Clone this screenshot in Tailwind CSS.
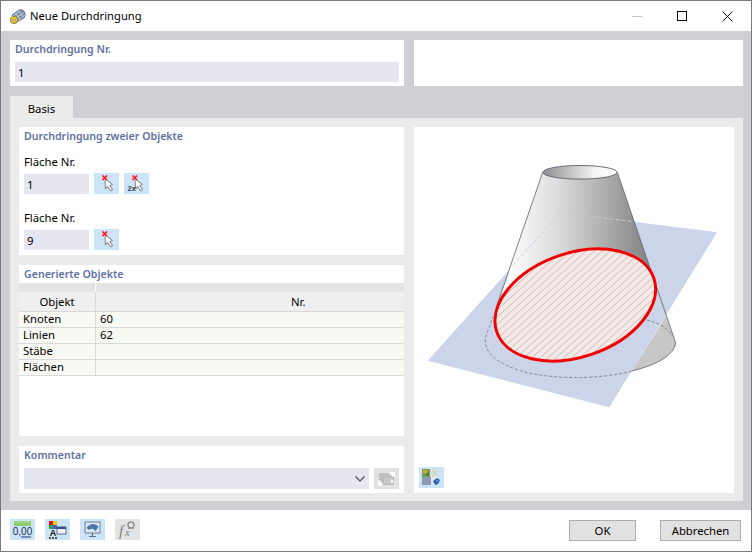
<!DOCTYPE html>
<html lang="de">
<head>
  <meta charset="UTF-8">
  <title>Neue Durchdringung</title>
  <script src="https://cdn.jsdelivr.net/npm/@tailwindcss/browser@4"></script>
</head>
<body class="bg-white">
<svg width="0" height="0" class="absolute">
  <defs>
    <symbol id="pick" viewBox="0 0 25 21">
      <path d="M11 6 L11.5 15.5 L13.8 13.5 L16.5 18 L18.5 16.5 L15.8 12.5 L18.5 11.5 Z" fill="#fff" stroke="#808080" stroke-width="1"/>
      <path d="M16.5 18 L18.5 16.5 M11.8 15.5 L13.8 13.5" stroke="#9c9c9c" stroke-width="1.2" fill="none"/>
      <path d="M8.5 2.5 L13 7 M13 2.5 L8.5 7" stroke="#ffa0a8" stroke-width="2.4" fill="none"/>
      <path d="M8.5 2.5 L13 7 M13 2.5 L8.5 7" stroke="#f0141e" stroke-width="1.1" fill="none"/>
    </symbol>
    <symbol id="pick2" viewBox="0 0 25 21">
      <path d="M11 6 L11.5 15.5 L13.8 13.5 L16.5 18 L18.5 16.5 L15.8 12.5 L18.5 11.5 Z" fill="#fff" stroke="#808080" stroke-width="1"/>
      <path d="M16.5 18 L18.5 16.5 M11.8 15.5 L13.8 13.5" stroke="#9c9c9c" stroke-width="1.2" fill="none"/>
      <path d="M8.5 2.5 L13 7 M13 2.5 L8.5 7" stroke="#ffa0a8" stroke-width="2.4" fill="none"/>
      <path d="M8.5 2.5 L13 7 M13 2.5 L8.5 7" stroke="#f0141e" stroke-width="1.1" fill="none"/>
      <text x="3.5" y="18" font-family="Liberation Sans" font-weight="700" font-size="7.5" fill="#3c3c3c">2x</text>
    </symbol>
  </defs>
</svg>

<div class="w-[752px] h-[552px] overflow-hidden flex flex-col border border-[#7a7a7a] text-[11.3px] text-black font-['Noto_Sans',sans-serif]">

  <!-- Title bar -->
  <div class="h-[30px] shrink-0 flex items-center bg-white">
    <svg class="ml-[8px] w-[17px] h-[17px]" viewBox="0 0 17 17">
      <path d="M3 7 L10 2 C12 1 15 2 16 5 C16.5 7 16 9 15 10 L8 14 Z" fill="#7f90ae" stroke="#48536a" stroke-width="0.7"/>
      <path d="M6 4.8 L11 11 M9 3 L14 8.5 M4 8 L11 2.5 M6 11 L14.5 4.5 M9 13 L16 7" stroke="#d9e2f0" stroke-width="0.7" fill="none"/>
      <circle cx="5" cy="12" r="3.7" fill="#e7c23e" stroke="#8e7218" stroke-width="0.7"/>
      <circle cx="5" cy="12.7" r="1.3" fill="#fff6c8" stroke="#6d5610" stroke-width="0.5"/>
    </svg>
    <span class="ml-[4px] text-[11.2px] leading-none">Neue Durchdringung</span>
    <div class="ml-auto flex items-center mr-[18px] gap-[35px]">
      <span class="w-[10px] h-px bg-[#c8c8c8]"></span>
      <span class="w-[10px] h-[10px] border border-black"></span>
      <svg class="w-[11px] h-[11px]" viewBox="0 0 11 11"><path d="M0.5 0.5 L10.5 10.5 M10.5 0.5 L0.5 10.5" stroke="#111" stroke-width="1" fill="none"/></svg>
    </div>
  </div>

  <!-- Dialog body -->
  <div class="h-[479px] shrink-0 bg-[#d0d0d4] pl-[9px] pr-[8px] pt-[9px]">
    <div class="flex gap-[10px] h-[46px]">
      <div class="w-[394px] bg-white px-[5px] pt-[2px]">
        <div class="h-[20px] leading-[14px] font-semibold text-[10.6px] text-[#6072a0]">Durchdringung Nr.</div>
        <div class="h-[20px] bg-[#e6e6f0] px-[3px] leading-[21px]">1</div>
      </div>
      <div class="flex-1 bg-white"></div>
    </div>

    <div class="mt-[10px] w-[63px] h-[22px] bg-[#ebebeb] text-center leading-[26px]">Basis</div>

    <div class="h-[383px] bg-[#ebebeb] pt-[9px] pl-[9px] pr-[9px] pb-[8px] flex gap-[10px]">
      <!-- Left column -->
      <div class="w-[385px] flex flex-col gap-[10px]">
        <div class="h-[128px] bg-white px-[5px]">
          <div class="h-[20px] leading-[18px] font-semibold text-[10.6px] text-[#6072a0]">Durchdringung zweier Objekte</div>
          <div class="mt-[7px] h-[19px] leading-[16px]">Fläche Nr.</div>
          <div class="flex items-center">
            <div class="w-[65px] h-[20px] bg-[#e6e6f0] px-[3px] leading-[21px]">1</div>
            <svg class="ml-[5px] w-[25px] h-[21px] bg-[#cce4f7]"><use href="#pick"/></svg>
            <svg class="ml-[5px] w-[25px] h-[21px] bg-[#cce4f7]"><use href="#pick2"/></svg>
          </div>
          <div class="mt-[15px] h-[20px] leading-[17px]">Fläche Nr.</div>
          <div class="flex items-center">
            <div class="w-[65px] h-[20px] bg-[#e6e6f0] px-[3px] leading-[21px]">9</div>
            <svg class="ml-[5px] w-[25px] h-[21px] bg-[#cce4f7]"><use href="#pick"/></svg>
          </div>
        </div>

        <div class="h-[171px] bg-white">
          <div class="h-[18px] pl-[5px] leading-[18px] font-semibold text-[10.6px] text-[#6072a0]">Generierte Objekte</div>
          <div class="h-[9px] bg-[#e4e4e4] flex"><div class="w-[77px] border-r border-[#fafafa]"></div></div>
          <div class="h-[20px] bg-[#efefef] flex border-b border-[#d8d8d8]">
            <div class="w-[77px] text-center leading-[19px] border-r border-[#d8d8d8]">Objekt</div>
            <div class="flex-1 pl-[195px] leading-[19px]">Nr.</div>
          </div>
          <div class="h-[16px] bg-[#f9f9f4] flex border-b border-[#d8d8d8] leading-[14px]">
            <div class="w-[77px] pl-[4px] border-r border-[#d8d8d8]">Knoten</div>
            <div class="flex-1 pl-[4px]">60</div>
          </div>
          <div class="h-[16px] bg-[#f9f9f4] flex border-b border-[#d8d8d8] leading-[14px]">
            <div class="w-[77px] pl-[4px] border-r border-[#d8d8d8]">Linien</div>
            <div class="flex-1 pl-[4px]">62</div>
          </div>
          <div class="h-[16px] bg-[#f9f9f4] flex border-b border-[#d8d8d8] leading-[14px]">
            <div class="w-[77px] pl-[4px] border-r border-[#d8d8d8]">Stäbe</div>
            <div class="flex-1 pl-[4px]"></div>
          </div>
          <div class="h-[16px] bg-[#f9f9f4] flex border-b border-[#d8d8d8] leading-[14px]">
            <div class="w-[77px] pl-[4px] border-r border-[#d8d8d8]">Flächen</div>
            <div class="flex-1 pl-[4px]"></div>
          </div>
        </div>

        <div class="h-[47px] bg-white px-[5px]">
          <div class="h-[22px] leading-[18px] font-semibold text-[10.6px] text-[#6072a0]">Kommentar</div>
          <div class="flex">
            <div class="w-[345px] h-[21px] bg-[#e6e6f0] flex items-center justify-end pr-[4px]">
              <svg class="w-[10px] h-[6px]" viewBox="0 0 10 6"><path d="M0.5 0.5 L5 5 L9.5 0.5" stroke="#444" stroke-width="1.1" fill="none"/></svg>
            </div>
            <div class="ml-[5px] w-[25px] h-[21px] bg-[#e1e1e1] flex items-center justify-center">
              <svg class="w-[17px] h-[14px]" viewBox="0 0 17 14">
                <rect width="17" height="14" fill="#fff"/>
                <rect x="1" y="1" width="10" height="7" fill="#d0d0d0" stroke="#a0a0a0" stroke-width="0.6"/>
                <rect x="3" y="3" width="10" height="7" fill="#d0d0d0" stroke="#a0a0a0" stroke-width="0.6"/>
                <rect x="5" y="5" width="11" height="8" fill="#c8c8c8" stroke="#a0a0a0" stroke-width="0.6"/>
                <rect x="13" y="8" width="2" height="3" fill="#fff"/>
              </svg>
            </div>
          </div>
        </div>
      </div>

      <!-- Preview -->
      <div class="relative w-[320px] h-[366px] bg-white">
        <svg class="block" width="320" height="366" viewBox="414 127 320 366">
          <defs>
            <linearGradient id="coneG" gradientUnits="userSpaceOnUse" x1="505" y1="0" x2="655" y2="0">
              <stop offset="0" stop-color="#ffffff"/>
              <stop offset="0.35" stop-color="#dcdcdc"/>
              <stop offset="1" stop-color="#7c7c7c"/>
            </linearGradient>
            <linearGradient id="topG" x1="0" y1="0" x2="1" y2="0">
              <stop offset="0" stop-color="#8f8f8f"/>
              <stop offset="0.7" stop-color="#f4f4f4"/>
              <stop offset="1" stop-color="#ffffff"/>
            </linearGradient>
            <clipPath id="cutClip">
              <ellipse cx="575.3" cy="305" rx="83" ry="51.9" transform="rotate(-18.9 575.3 305)"/>
            </clipPath>
          </defs>
          <polygon points="427.7,360.7 609.3,407.3 717,232.3 560.7,212.7" fill="#cbd4e8"/>
          <polygon points="542.7,172.3 617.3,172.3 650,268 501,295" fill="url(#coneG)"/>
          <path d="M665.5,316.7 L666.6,316.7 L675.7,343 A95 35 0 0 1 631.7,371 Z" fill="#c6c7c6"/>
          <path d="M542.7,172.3 L497,305 M617.3,172.3 L675.7,343" stroke="#5f5f70" stroke-width="0.8" fill="none"/>
          <path d="M675.7,343 A95 35 0 0 1 631.7,371" stroke="#5f5f70" stroke-width="0.8" fill="none"/>
          <ellipse cx="580" cy="172.3" rx="37" ry="6.8" fill="url(#topG)" stroke="#5f5f72" stroke-width="0.9"/>
          <path d="M513,265 L560.7,212.7 L633,221.7" stroke="#c6cbe0" stroke-width="0.9" stroke-dasharray="4 2" fill="none"/>
          <path d="M631.7,371 C600,380 540,381 508,366 C488,357 482,345 487,333 L493,317" stroke="#6a6a7c" stroke-width="0.7" stroke-dasharray="3 2" fill="none"/>
          <path d="M646.7,320 C660,323 670,330 672,336" stroke="#6a6a7c" stroke-width="0.7" stroke-dasharray="3 2" fill="none"/>
          <ellipse cx="575.3" cy="305" rx="83" ry="51.9" transform="rotate(-18.9 575.3 305)" fill="#f5e9e7"/>
          <!-- hatch lines, clipped to the cut -->
          <g clip-path="url(#cutClip)">
            <path stroke="#ab9da0" stroke-width="0.6" fill="none" d="M380 365 l133 -120 m-125 120 l133 -120 m-125 120 l133 -120 m-125 120 l133 -120 m-125 120 l133 -120 m-125 120 l133 -120 m-125 120 l133 -120 m-125 120 l133 -120 m-125 120 l133 -120 m-125 120 l133 -120 m-125 120 l133 -120 m-125 120 l133 -120 m-125 120 l133 -120 m-125 120 l133 -120 m-125 120 l133 -120 m-125 120 l133 -120 m-125 120 l133 -120 m-125 120 l133 -120 m-125 120 l133 -120 m-125 120 l133 -120 m-125 120 l133 -120 m-125 120 l133 -120 m-125 120 l133 -120 m-125 120 l133 -120 m-125 120 l133 -120 m-125 120 l133 -120 m-125 120 l133 -120 m-125 120 l133 -120 m-125 120 l133 -120 m-125 120 l133 -120 m-125 120 l133 -120 m-125 120 l133 -120 m-125 120 l133 -120 m-125 120 l133 -120"/>
          </g>
          <ellipse cx="575.3" cy="305" rx="83" ry="51.9" transform="rotate(-18.9 575.3 305)" fill="none" stroke="#f00000" stroke-width="3"/>
        </svg>
        <div class="absolute left-[5px] bottom-[5px] w-[25px] h-[21px] bg-[#cce4f7] flex items-center justify-center">
          <svg class="w-[19px] h-[17px]" viewBox="0 0 19 17">
            <rect x="0" y="0" width="8" height="8" fill="#7f9a55"/>
            <rect x="1" y="1" width="4" height="3" fill="#d8a93a"/>
            <rect x="4" y="4" width="3" height="3" fill="#3f7f4a"/>
            <rect x="8" y="0" width="8" height="8" fill="#dbe6dd"/>
            <path d="M11 0v8 M13.5 0v8 M8 3h8 M8 5.5h8" stroke="#c2d2c6" stroke-width="0.6"/>
            <rect x="0" y="8" width="9" height="8" fill="#8f9ab4"/>
            <rect x="9" y="8" width="6" height="8" fill="#e2e7f0"/>
            <path d="M11 12 L15 9 L18 11 L16 15 L13 16 Z" fill="#2a66b0"/>
            <path d="M14 12 L16 11.5" stroke="#a8c8ec" stroke-width="0.8"/>
          </svg>
        </div>
      </div>
    </div>
  </div>

  <!-- Footer -->
  <div class="flex-1 bg-white flex items-start pl-[9px] pr-[10px] pt-[9px]">
    <svg class="w-[25px] h-[21px] bg-[#cce4f7]" viewBox="0 0 25 21">
      <rect x="4" y="2" width="17" height="5" fill="#8ccb6c"/>
      <path d="M6 2v2 M9 2v2 M12 2v2 M15 2v2 M18 2v2" stroke="#dff0d0" stroke-width="0.7"/>
      <text x="12.5" y="16" text-anchor="middle" font-family="Liberation Sans" font-size="10" fill="#1d2b55">0,00</text>
      <path d="M11 18 H21" stroke="#1d3a8a" stroke-width="1"/>
    </svg>
    <svg class="ml-[10px] w-[25px] h-[21px] bg-[#cce4f7]" viewBox="0 0 25 21">
      <rect x="4" y="2" width="4" height="4" fill="#e0141c"/>
      <rect x="8" y="2" width="4" height="4" fill="#e8c814"/>
      <rect x="4" y="6" width="4" height="4" fill="#28a838"/>
      <rect x="8" y="6" width="4" height="4" fill="#4860d0"/>
      <text x="8" y="17" text-anchor="middle" font-family="Liberation Sans" font-weight="700" font-size="9" fill="#111">A</text>
      <path d="M4 19h2 M7 19h2 M10 19h2" stroke="#222" stroke-width="1.6"/>
      <rect x="12" y="8" width="9" height="7" fill="#f2f2f2" stroke="#44506a" stroke-width="0.8"/>
      <rect x="12" y="8" width="9" height="2" fill="#34508c"/>
    </svg>
    <svg class="ml-[10px] w-[25px] h-[21px] bg-[#cce4f7]" viewBox="0 0 25 21">
      <rect x="5" y="3" width="15" height="11" fill="#dde7f0" stroke="#6f8096" stroke-width="1"/>
      <path d="M6.5 9 C10 4 15 4 18.5 7.5 L15.5 12.5 C14 9 11 9 9 11 Z" fill="#4a78a8"/>
      <path d="M12.5 14 V17 M9 17.5 H16" stroke="#5b6b80" stroke-width="1.2"/>
    </svg>
    <svg class="ml-[10px] w-[25px] h-[21px] bg-[#e4e4e4]" viewBox="0 0 25 21">
      <text x="4" y="17" font-family="Liberation Serif" font-style="italic" font-size="15" fill="#808080">f</text>
      <text x="10" y="17" font-family="Liberation Serif" font-style="italic" font-size="11" fill="#808080">x</text>
      <circle cx="16" cy="6" r="3" fill="none" stroke="#909090" stroke-width="1.4"/>
      <path d="M13 9.5 H19" stroke="#909090" stroke-width="0.8"/>
    </svg>
    <button class="ml-auto mt-px w-[67px] h-[21px] bg-[#e1e1e1] border border-[#adadad] text-[11.3px] leading-none">OK</button>
    <button class="ml-[24px] mt-px w-[81px] h-[21px] bg-[#e1e1e1] border border-[#adadad] text-[11.3px] leading-none">Abbrechen</button>
  </div>
</div>
</body>
</html>
